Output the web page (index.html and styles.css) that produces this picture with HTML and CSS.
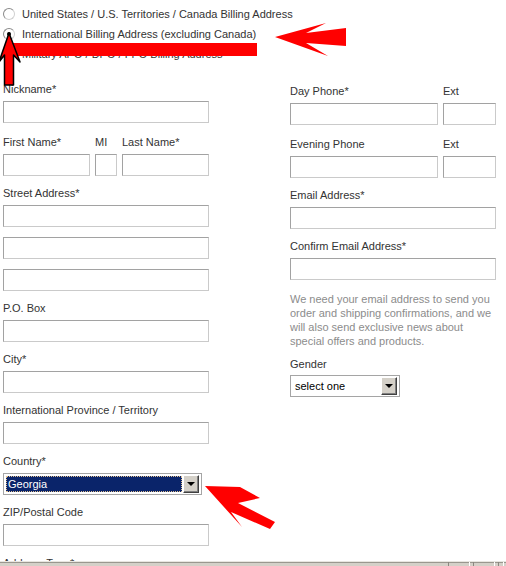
FILE: index.html
```html
<!DOCTYPE html>
<html lang="en">
<head>
  <meta charset="UTF-8">
  <meta name="viewport" content="width=device-width, initial-scale=1.0">
  <title>Billing Address</title>
  <link rel="stylesheet" href="styles.css">
</head>
<body>
  <div class="page">
    <div class="address-type">
      <div class="radio-row"><span class="radio"></span>United States / U.S. Territories / Canada Billing Address</div>
      <div class="radio-row"><span class="radio checked"></span>International Billing Address (excluding Canada)</div>
      <div class="radio-row"><span class="radio"></span>Military APO / DPO / FPO Billing Address</div>
    </div>

    <div class="columns">
      <div class="col col-left">
        <div class="field field-wide">
          <div class="label">Nickname*</div>
          <input type="text" class="text-input">
        </div>
        <div class="field split">
          <div class="part part-name">
            <div class="label">First Name*</div>
            <input type="text" class="text-input">
          </div>
          <div class="part part-mi">
            <div class="label">MI</div>
            <input type="text" class="text-input">
          </div>
          <div class="part part-name">
            <div class="label">Last Name*</div>
            <input type="text" class="text-input">
          </div>
        </div>
        <div class="field">
          <div class="label">Street Address*</div>
          <input type="text" class="text-input">
          <input type="text" class="text-input extra">
          <input type="text" class="text-input extra">
        </div>
        <div class="field">
          <div class="label">P.O. Box</div>
          <input type="text" class="text-input">
        </div>
        <div class="field">
          <div class="label">City*</div>
          <input type="text" class="text-input">
        </div>
        <div class="field">
          <div class="label">International Province / Territory</div>
          <input type="text" class="text-input">
        </div>
        <div class="field">
          <div class="label">Country*</div>
          <div class="select select-country">
            <span class="select-value selected">Georgia</span>
            <span class="select-btn"><span class="caret"></span></span>
          </div>
        </div>
        <div class="field">
          <div class="label">ZIP/Postal Code</div>
          <input type="text" class="text-input">
        </div>
        <div class="field">
          <div class="label">Address Type*</div>
        </div>
      </div>

      <div class="col col-right">
        <div class="field field-wide split">
          <div class="part part-phone">
            <div class="label">Day Phone*</div>
            <input type="text" class="text-input">
          </div>
          <div class="part part-ext">
            <div class="label">Ext</div>
            <input type="text" class="text-input">
          </div>
        </div>
        <div class="field split">
          <div class="part part-phone">
            <div class="label">Evening Phone</div>
            <input type="text" class="text-input">
          </div>
          <div class="part part-ext">
            <div class="label">Ext</div>
            <input type="text" class="text-input">
          </div>
        </div>
        <div class="field">
          <div class="label">Email Address*</div>
          <input type="text" class="text-input">
        </div>
        <div class="field">
          <div class="label">Confirm Email Address*</div>
          <input type="text" class="text-input">
        </div>
        <p class="note">We need your email address to send you<br>order and shipping confirmations, and we<br>will also send exclusive news about<br>special offers and products.</p>
        <div class="field">
          <div class="label label-tight">Gender</div>
          <div class="select select-gender">
            <span class="select-value">select one</span>
            <span class="select-btn"><span class="caret"></span></span>
          </div>
        </div>
      </div>
    </div>
  </div>

  <!-- red annotation marks drawn over the form -->
  <svg class="marks" width="506" height="566" viewBox="0 0 506 566">
    <rect x="13" y="43" width="244" height="13" fill="#ff0000"/>
    <polygon points="275,37 326,23 306,33 346,28 346,46 306,43 328,56" fill="#ff0000"/>
    <polygon points="9,33 20,62 13.5,55 13.5,85 4.5,85 4.5,55 -1,62" fill="#ff0000" stroke="#000" stroke-width="1.5" stroke-linejoin="round"/>
    <polygon points="205,486 240,487 260,498 238,503 275,522 270,529 231,512 242,527" fill="#ff0000"/>
  </svg>

  <div class="status-bar">
    <span class="status-cell"></span>
    <span class="status-cell"></span>
    <span class="status-cell small"></span>
  </div>
</body>
</html>
```

FILE: styles.css
```css
body { margin: 0; font-family: "Liberation Sans", Arial, sans-serif; font-size: 11px; color: #333; background: #fff; overflow: hidden; }
.page { height: 566px; overflow: hidden; }

.address-type { padding: 4px 0 0 3px; }
.radio-row { height: 20px; display: flex; align-items: center; }
.radio { width: 10px; height: 10px; border: 1px solid #8a8a8a; border-right-color: #d0d0d0; border-bottom-color: #d0d0d0; border-radius: 50%; background: #fff; margin-right: 7px; display: flex; align-items: center; justify-content: center; }
.radio.checked::after { content: ""; width: 4px; height: 4px; border-radius: 50%; background: #000; }

.columns { display: flex; padding-left: 3px; }
.col { width: 206px; }
.col-left { margin-top: 18px; }
.col-right { margin-left: 81px; margin-top: 20px; }

.field { margin-bottom: 10px; }
.field-wide { margin-bottom: 12px; }
.split { display: flex; gap: 5px; }
.part-name { width: 87px; }
.part-mi { width: 22px; }
.part-phone { width: 148px; }
.part-ext { width: 53px; }

.label { line-height: 14px; height: 14px; margin-bottom: 5px; white-space: nowrap; }
.label-tight { margin-bottom: 4px; }

.text-input { display: block; box-sizing: border-box; width: 100%; height: 22px; margin: 0; padding: 2px 3px; border: 1px solid #a2a2a2; border-right-color: #cacaca; border-bottom-color: #cacaca; background: #fff; font: inherit; }
.text-input.extra { margin-top: 10px; }

.select { box-sizing: border-box; height: 22px; border: 1px solid #a5a5a5; background: #fff; display: flex; align-items: center; padding: 2px; }
.select-country { width: 199px; }
.select-gender { width: 110px; }
.select-value { flex: 1; height: 16px; line-height: 16px; padding-left: 2px; color: #000; font-size: 11px; }
.select-value.selected { background: #0a246a; color: #fff; outline: 1px dotted #e0c090; outline-offset: -1px; }
.select-btn { width: 16px; height: 18px; box-sizing: border-box; margin-left: 1px; background: #d4d0c8; border: 1px solid; border-color: #fff #404040 #404040 #fff; box-shadow: inset -1px -1px 0 #808080; display: flex; align-items: center; justify-content: center; }
.caret { width: 0; height: 0; border-left: 4px solid transparent; border-right: 4px solid transparent; border-top: 4px solid #000; }

.note { margin: 12px 0 9px; line-height: 14px; color: #8c8c8c; white-space: nowrap; }

.marks { position: absolute; left: 0; top: 0; pointer-events: none; }

.status-bar { position: fixed; left: 0; right: 0; bottom: 0; height: 4px; background: #d4d0c8; border-top: 1px solid #e8e6e0; box-shadow: inset 0 1px 0 #9a978f; display: flex; justify-content: flex-end; gap: 3px; padding-right: 2px; }
.status-cell { width: 20px; border-left: 1px solid #8a877f; border-right: 1px solid #fff; }
.status-cell.small { width: 4px; }
```
